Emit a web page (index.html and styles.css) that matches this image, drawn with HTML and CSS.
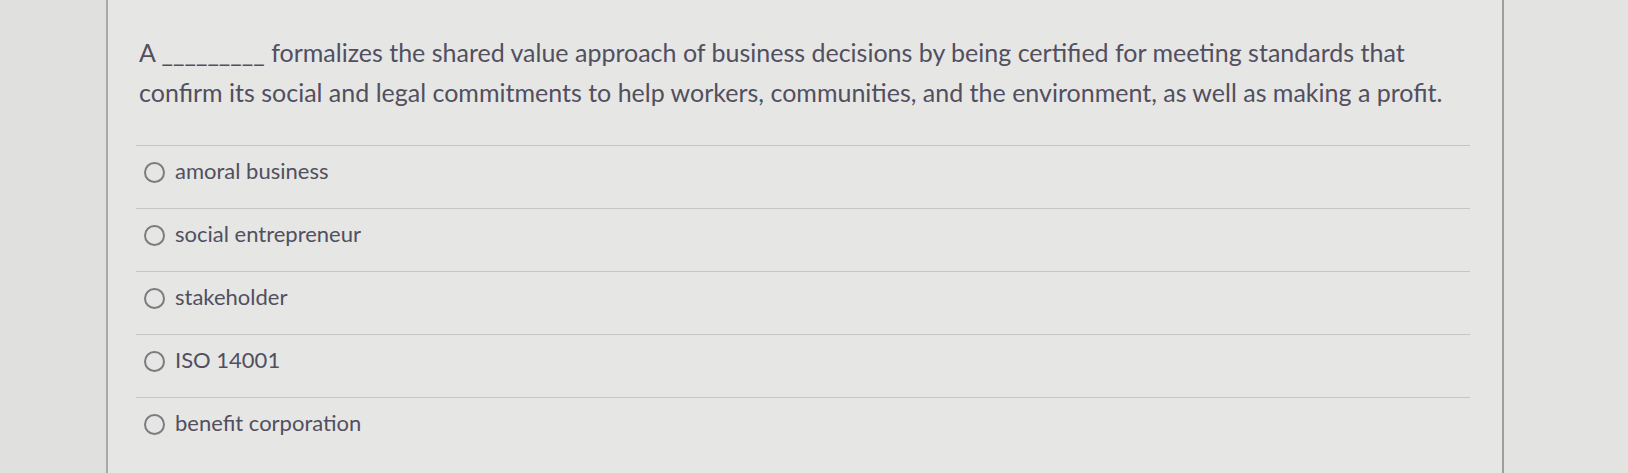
FILE: index.html
```html
<!DOCTYPE html>
<html lang="en">
<head>
<meta charset="utf-8">
<title>Question</title>
<link rel="stylesheet" href="styles.css">
</head>
<body>
<div class="page">
  <div class="gutter-left"></div>
  <main class="panel">
    <p class="question">A _________ formalizes the shared value approach of business decisions by being certified for meeting standards that confirm its social and legal commitments to help workers, communities, and the environment, as well as making a profit.</p>
    <ul class="options">
      <li class="option"><span class="radio"></span><span class="label">amoral business</span></li>
      <li class="option"><span class="radio"></span><span class="label">social entrepreneur</span></li>
      <li class="option"><span class="radio"></span><span class="label">stakeholder</span></li>
      <li class="option"><span class="radio"></span><span class="label">ISO 14001</span></li>
      <li class="option"><span class="radio"></span><span class="label">benefit corporation</span></li>
    </ul>
  </main>
  <div class="gutter-right"></div>
</div>
</body>
</html>
```
FILE: styles.css
```css
html, body {
  margin: 0;
  padding: 0;
  height: 100%;
}
body {
  background: #e4e4e2;
  font-family: Lato, "Open Sans", sans-serif;
  color: #514f60;
  overflow: hidden;
}
.page {
  display: flex;
  height: 473px;
}
.gutter-left {
  width: 106px;
  flex: none;
  background: #e0e0df;
}
.panel {
  width: 1398px;
  flex: none;
  border-left: 2px solid #a9a9a9;
  border-right: 2px solid #9e9e9e;
  background: #e6e6e4;
  padding: 0 32px 0 28px;
  box-sizing: border-box;
}
.gutter-right {
  flex: 1;
  background: #e3e3e2;
}
.question {
  margin: 32px 0 0 0;
  padding: 0 0 33px 3px;
  font-size: 25px;
  line-height: 40px;
  border-bottom: 1px solid #c4c4c4;
}
.options {
  list-style: none;
  margin: 0;
  padding: 0;
}
.option {
  display: flex;
  align-items: flex-start;
  gap: 10px;
  height: 62px;
  padding: 0 0 0 8px;
  border-bottom: 1px solid #c6c6c6;
}
.option:last-child {
  border-bottom: none;
}
.radio {
  width: 17px;
  height: 17px;
  border: 2px solid #7b7b80;
  border-radius: 50%;
  margin-top: 16px;
  flex: none;
}
.label {
  font-size: 22px;
  line-height: 26px;
  margin-top: 12px;
}
```
